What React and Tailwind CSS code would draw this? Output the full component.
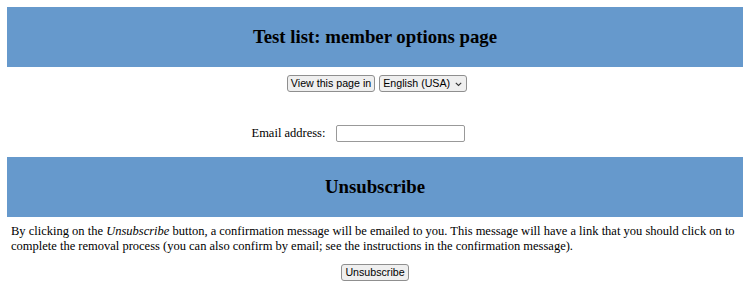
export default function App() {
  const btn =
    "h-[17px] px-[3px] bg-[#efefef] border border-[#8f8f8f] rounded-[3px] text-[10.67px] leading-none text-black font-['Liberation_Sans',Arial,sans-serif] flex items-center";
  return (
    <div className="p-[7px] font-['Liberation_Serif','Times_New_Roman',serif] text-[12.5px] text-black bg-white min-h-[288px]">
      <div className="h-[60px] bg-[#6699cc] flex items-center justify-center">
        <h1 className="font-bold text-[18.8px] leading-none">Test list: member options page</h1>
      </div>
      <div className="mt-[8px] flex justify-center gap-[4px] pl-[4px]">
        <button className={btn}>View this page in</button>
        <div className={btn + " gap-[5px] pr-[4px]"}>
          <span>English (USA)</span>
          <svg width="7" height="5" viewBox="0 0 7 5" className="mt-[1px]">
            <path d="M0.8 0.8 L3.5 3.5 L6.2 0.8" fill="none" stroke="#333" strokeWidth="1.1" />
          </svg>
        </div>
      </div>
      <div className="mt-[33px] flex justify-center items-center pr-[33px] gap-[11px]">
        <span className="leading-none">Email address:</span>
        <div className="w-[129px] h-[17px] border border-[#999] rounded-[2px] bg-white"></div>
      </div>
      <div className="mt-[15px] h-[60px] bg-[#6699cc] flex items-center justify-center">
        <h2 className="font-bold text-[18.8px] leading-none">Unsubscribe</h2>
      </div>
      <p className="mt-[7px] px-[4px] leading-[14.5px]">
        By clicking on the <em>Unsubscribe</em> button, a confirmation message will be emailed to you. This message will have a link that you should click on to complete the removal process (you can also confirm by email; see the instructions in the confirmation message).
      </p>
      <div className="mt-[11px] flex justify-center">
        <button className={btn}>Unsubscribe</button>
      </div>
    </div>
  );
}
